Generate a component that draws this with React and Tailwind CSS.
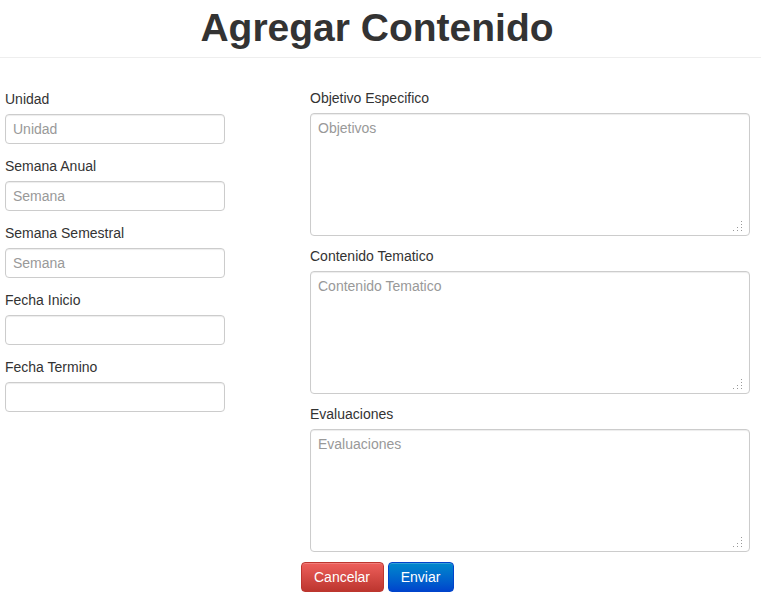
import React from 'react';

const inputCls =
  'block w-[220px] h-[30px] pl-[7px] pr-[6px] border border-[#ccc] rounded-[4px] bg-white text-[14px] text-[#555] placeholder:text-[#999] shadow-[inset_0_1px_1px_rgba(0,0,0,0.075)] outline-none';

const areaCls =
  'block w-[440px] h-[123px] pl-[7px] pr-[6px] py-[4px] border border-[#ccc] rounded-[4px] bg-white text-[14px] leading-[20px] text-[#555] placeholder:text-[#999] shadow-[inset_0_1px_1px_rgba(0,0,0,0.075)] outline-none resize-none';

function Grip() {
  // dotted resize handle in the corner of the textarea
  const dots = [
    [8, 0], [8, 3], [4, 6], [8, 6], [0, 9], [4, 9], [8, 9],
  ];
  return (
    <svg className="absolute right-[8px] bottom-[5px]" width="9" height="10" viewBox="0 0 9 10">
      {dots.map(([x, y], i) => (
        <rect key={i} x={x} y={y} width="1" height="1" fill="#999" />
      ))}
    </svg>
  );
}

function Field({ label, placeholder, first }) {
  return (
    <div className={first ? '' : 'mt-[12px]'}>
      <label className="block h-[20px] leading-[20px] text-[14px] text-[#333] mb-[5px]">{label}</label>
      <input className={inputCls} placeholder={placeholder} />
    </div>
  );
}

function Area({ label, placeholder, first }) {
  return (
    <div className={first ? '' : 'mt-[10px]'}>
      <label className="block h-[20px] leading-[20px] text-[14px] text-[#333] mb-[5px]">{label}</label>
      <div className="relative w-[440px]">
        <textarea className={areaCls} placeholder={placeholder} />
        <Grip />
      </div>
    </div>
  );
}

export default function App() {
  return (
    <div className="min-h-[600px] bg-white text-[#333]" style={{ fontFamily: '"Liberation Sans", Arial, sans-serif' }}>
      {/* header */}
      <div className="border-b border-[#eee] h-[58px] flex items-center justify-center pr-[7px]">
        <h1 className="text-[39px] font-bold leading-[44px] text-[#333] mt-[-2px]">Agregar Contenido</h1>
      </div>

      <div className="flex pl-[5px] mt-[30px]">
        <div className="w-[305px] pt-[1px]">
          <Field first label="Unidad" placeholder="Unidad" />
          <Field label="Semana Anual" placeholder="Semana" />
          <Field label="Semana Semestral" placeholder="Semana" />
          <Field label="Fecha Inicio" placeholder="" />
          <Field label="Fecha Termino" placeholder="" />
        </div>
        <div>
          <Area first label="Objetivo Especifico" placeholder="Objetivos" />
          <Area label="Contenido Tematico" placeholder="Contenido Tematico" />
          <Area label="Evaluaciones" placeholder="Evaluaciones" />
        </div>
      </div>

      <div className="flex justify-center gap-[4px] mt-[10px] pr-[7px]">
        <button className="w-[83px] h-[30px] text-[14px] text-white rounded-[4px] border border-[#bd362f] bg-gradient-to-b from-[#ee5f5b] to-[#bd362f] shadow-[inset_0_1px_0_rgba(255,255,255,0.2)]">
          Cancelar
        </button>
        <button className="w-[66px] h-[30px] text-[14px] text-white rounded-[4px] border border-[#0044cc] bg-gradient-to-b from-[#0088cc] to-[#0044cc] shadow-[inset_0_1px_0_rgba(255,255,255,0.2)]">
          Enviar
        </button>
      </div>
    </div>
  );
}
